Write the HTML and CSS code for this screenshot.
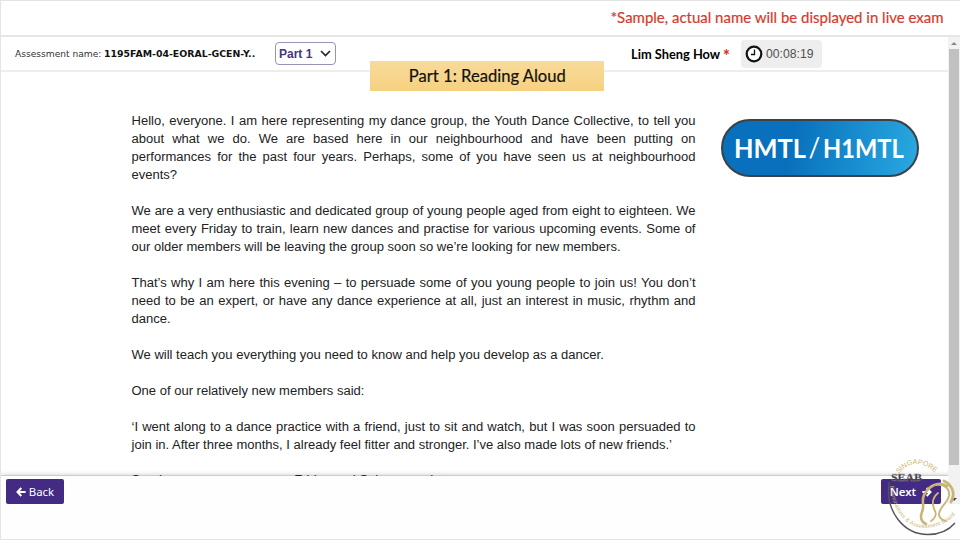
FILE: index.html
```html
<!DOCTYPE html>
<html lang="en">
<head>
<meta charset="utf-8">
<title>Reading Aloud</title>
<link rel="stylesheet" href="styles.css">
</head>
<body>
<div class="page">
  <div class="notice"><span>*Sample, actual name will be displayed in live exam</span></div>
  <header class="bar">
    <span class="label">Assessment name:</span>
    <span class="name">1195FAM-04-EORAL-GCEN-Y..</span>
    <div class="select"><span>Part 1</span>
      <svg width="11" height="7" viewBox="0 0 11 7"><path d="M1 1l4.500 4.500L10 1" fill="none" stroke="#222" stroke-width="1.600"/></svg>
    </div>
    <span class="student">Lim Sheng How <b>*</b></span>
    <div class="timer">
      <svg width="18" height="18" viewBox="0 0 18 18"><circle cx="9" cy="9" r="7.3" fill="#fff" stroke="#111" stroke-width="2.200"/><path d="M9.500 4.500v5H6" fill="none" stroke="#111" stroke-width="1.300"/></svg>
      <span>00:08:19</span>
    </div>
  </header>
  <main class="content">
    <p>Hello, everyone. I am here representing my dance group, the Youth Dance Collective, to tell you about what we do. We are based here in our neighbourhood and have been putting on performances for the past four years. Perhaps, some of you have seen us at neighbourhood events?</p>
    <p>We are a very enthusiastic and dedicated group of young people aged from eight to eighteen. We meet every Friday to train, learn new dances and practise for various upcoming events. Some of our older members will be leaving the group soon so we’re looking for new members.</p>
    <p>That’s why I am here this evening – to persuade some of you young people to join us! You don’t need to be an expert, or have any dance experience at all, just an interest in music, rhythm and dance.</p>
    <p>We will teach you everything you need to know and help you develop as a dancer.</p>
    <p>One of our relatively new members said:</p>
    <p>‘I went along to a dance practice with a friend, just to sit and watch, but I was soon persuaded to join in. After three months, I already feel fitter and stronger. I’ve also made lots of new friends.’</p>
    <p class="last">Send me a message or see Friday and Sal near and</p>
  </main>
  <footer class="foot">
    <button class="btn back"><svg width="10" height="10" viewBox="0 0 10 10"><path d="M5.300 1L1.500 5l3.800 4M1.800 5H9.600" fill="none" stroke="#fff" stroke-width="2"/></svg>Back</button>
    <button class="btn next">Next<svg width="10" height="10" viewBox="0 0 10 10"><path d="M4.700 1L8.500 5 4.700 9M8.200 5H.4" fill="none" stroke="#fff" stroke-width="2"/></svg></button>
  </footer>
  <div class="title"><span>Part 1: Reading Aloud</span></div>
  <div class="pill"><span class="level">HMTL</span><i>/</i><span class="level second">H1MTL</span></div>
  <div class="scroll"><i class="up"></i><i class="thumb"></i><i class="down"></i></div>
  <svg class="seal" width="76" height="86" viewBox="884 454 76 86">
    <defs><path id="arcTop" d="M899 474Q914 454 937 474"/><path id="arcBottom" d="M890 486C892 511 907 529 926 528C940 527 951 521 957 512"/></defs>
    <path d="M889 482C885 512 904 534.500 928 534.500C940 534.500 949 530 955 523" fill="none" stroke="#55525a" stroke-width="1.400"/>
    <g fill="#c9b576" font-family="Liberation Sans"><text font-size="7"><textPath href="#arcTop" textLength="42">SINGAPORE</textPath></text>
    <text font-size="5.600"><textPath href="#arcBottom" textLength="94">Examinations &amp; Assessment Board</textPath></text></g>
    <g fill="none" stroke="#c9b576" stroke-linecap="round"><path d="M947 486C938 480 928 487 924 495C921 502 925 505 922 512C920 517 921 522 926 524" stroke-width="2.600"/><path d="M936 485c9-1 14 4 13 11-2 8-9 10-10 18 0 4 3 6 7 7" stroke-width="1.800"/><path d="M944 481c8 4 12 12 7 21" stroke-width="2.800"/><path d="M938 493c-6 5-6 12-3 18 2 4-1 8-4 10" stroke-width="1.800"/></g>
    <text x="891" y="481" font-family="Liberation Serif" font-weight="700" font-size="10.500" fill="#3b3742" stroke="#8b8791" stroke-width=".3" textLength="31" lengthAdjust="spacingAndGlyphs">SEAB</text>
  </svg>
</div>
</body>
</html>
```
FILE: styles.css
```css
* { box-sizing: border-box; }
body { margin: 0; background: #fff; }
.page { position: relative; width: 960px; height: 540px; overflow: hidden; display: flex; flex-direction: column; border: 1px solid #e4e4e4; border-width: 1px 0 1px 1px; font-family: "Liberation Sans", Arial, sans-serif; }
.notice { height: 36px; flex: none; display: flex; justify-content: flex-end; align-items: center; padding: 0 16px 3px 0; border-bottom: 2px solid #e6e6e6; color: #d53a2c; font: 16px Lato, sans-serif; white-space: nowrap; }
.notice span { transform: scaleX(.936); transform-origin: right; -webkit-text-stroke: .2px; }
.bar { height: 35px; flex: none; display: flex; align-items: center; padding-left: 14px; border-bottom: 2px solid #ededed; white-space: nowrap; }
.label { width: 89px; font: 9.1px "DejaVu Sans", sans-serif; color: #333; }
.name { width: 171px; font: bold 9.4px "DejaVu Sans", sans-serif; color: #111; }
.select { width: 61px; height: 23px; display: flex; align-items: center; justify-content: space-between; padding: 0 4px 0 3px; border: 1px solid #9991b8; border-radius: 4px; color: #49367f; font-weight: bold; font-size: 12px; }
.student { margin-left: 295px; width: 110px; font: bold 13.5px Lato, sans-serif; color: #000; transform: scaleX(.95); transform-origin: left; padding-top: 1px; }
.student b { color: #d53a2c; font-size: 17px; line-height: 10px; vertical-align: -3px; }
.timer { width: 81px; height: 28px; display: flex; align-items: center; gap: 3px; padding-left: 4px; background: #eee; border-radius: 4px; font-size: 12.2px; color: #505050; }
.content { position: relative; flex: 1; min-height: 0; overflow: hidden; width: 694.5px; padding: 40.3px 0 0 130.5px; font-size: 13.02px; line-height: 17.98px; color: #222; text-align: justify; }
.content p { margin: 0 0 17.98px; }
.content .last { margin-top: -19px; padding-top: 17.98px; }
.foot { height: 63px; flex: none; display: flex; justify-content: space-between; align-items: flex-start; padding: 3px 19px 0 5px; box-shadow: 0 -1px 0 #ccc, 0 -1px 5px #ccc; background: #fefefe; }
.btn { height: 25px; display: flex; align-items: center; justify-content: center; gap: 3px; padding: 0; border: 0; border-radius: 2px; background: #432a83; color: #fff; font: 11.4px "Noto Sans", sans-serif; }
.back { width: 58px; }
.next { width: 60px; gap: 6px; font-weight: 600; }
.title { position: absolute; left: 369px; top: 60px; width: 234px; height: 30px; display: flex; align-items: center; justify-content: center; padding-bottom: 2px; background: linear-gradient(#f8da9b, #f6d180); font: 17.2px Lato, sans-serif; color: #111; white-space: nowrap; }
.title span { transform: scaleX(.965); -webkit-text-stroke: .2px; }
.pill { position: absolute; left: 720px; top: 118px; width: 198px; height: 58px; display: flex; align-items: center; padding: 0 0 2px 10.500px; border: 2.5px solid #3c4047; border-radius: 29px; background: linear-gradient(100deg, #0870bc 35%, #29a9e1); color: #fff; font: bold 27px Lato, sans-serif; }
.level { transform: scaleX(.94); transform-origin: left; width: 75px; }
.second { transform: scaleX(.875); }
.pill i { width: 14px; font-weight: 400; font-size: 26px; font-style: normal; }
.scroll { position: absolute; right: 0; top: 36px; width: 12px; height: 467px; background: #f2f2f2; }
.thumb { position: absolute; left: 1px; top: 12px; width: 10px; height: 416px; background: #c1c1c1; }
.up, .down { position: absolute; left: 3px; border: 3px solid transparent; }
.up { top: 2px; border-bottom-color: #888; }
.down { bottom: 0; border-top-color: #444; }
.seal { position: absolute; right: 0; bottom: -1px; }
```
